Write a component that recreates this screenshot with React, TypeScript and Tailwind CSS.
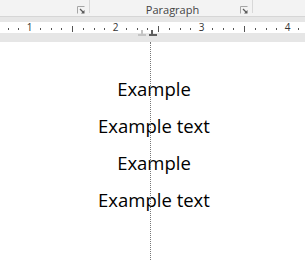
import React from "react";

const UNIT = 10.75;

function Launcher() {
  return (
    <svg width="8" height="8" viewBox="0 0 8 8" className="block">
      <path d="M0.5 7.5 V0.5 H7.5" fill="none" stroke="#a6a6a6" strokeWidth="1" />
      <path d="M3 3 L6.5 6.5" stroke="#5a5a5a" strokeWidth="1.2" />
      <polygon points="7.5,4 7.5,7.5 4,7.5" fill="#5a5a5a" />
    </svg>
  );
}

function RulerTicks() {
  const items: React.ReactNode[] = [];
  for (let k = 0; k < 40; k++) {
    const x = Math.round(-57 + k * UNIT);
    if (x < 0 || x > 305) continue;
    if (k % 8 === 0) continue;
    if (k % 4 === 0) {
      items.push(<rect key={k} x={x} y={4} width={1} height={6} fill="#555" />);
    } else {
      items.push(<rect key={k} x={x} y={6} width={1} height={2} fill="#555" />);
    }
  }
  return (
    <svg width="305" height="11" className="absolute left-0 top-0">
      {items}
    </svg>
  );
}

export default function App() {
  const numbers = [
    { n: "1", x: 29 },
    { n: "2", x: 115 },
    { n: "3", x: 201 },
    { n: "4", x: 287 },
  ];
  return (
    <div
      className="relative w-[305px] h-[260px] overflow-hidden bg-white"
      style={{ fontFamily: '"Open Sans", "Noto Sans", sans-serif' }}
    >
      {/* ribbon */}
      <div className="flex h-[17px] bg-[#f3f3f3] border-b border-[#d6d6d6]">
        <div className="w-[89px] flex justify-end items-start pt-[6px] pr-[4px]">
          <Launcher />
        </div>
        <div className="w-px h-[13px] bg-[#d8d8d8]" />
        <div className="w-[162px] relative flex justify-center">
          <span className="text-[11px] leading-[19px] text-[#444] pl-[3px]">Paragraph</span>
          <div className="absolute right-[4px] top-[6px]">
            <Launcher />
          </div>
        </div>
        <div className="w-px h-[13px] bg-[#d8d8d8]" />
        <div className="flex-1" />
      </div>
      {/* band */}
      <div className="h-[5px] bg-[#e6e6e6]" />
      {/* ruler */}
      <div className="relative h-[11px] bg-white">
        <RulerTicks />
        {numbers.map((it) => (
          <span
            key={it.n}
            className="absolute top-0 w-[10px] -ml-[5px] text-center text-[10px] leading-[11px] text-[#333]"
            style={{ left: it.x + 0.5 }}
          >
            {it.n}
          </span>
        ))}
      </div>
      {/* lower band */}
      <div className="h-[9px] bg-[#e6e6e6]" />
      {/* page */}
      <div className="flex flex-col items-center pt-[28px] pl-[3px] text-[18.5px] leading-[37px] text-black">
        <div>Example</div>
        <div>Example text</div>
        <div>Example</div>
        <div>Example text</div>
      </div>
      {/* indent markers */}
      <svg width="24" height="8" className="absolute left-[137px] top-[29px]">
        <rect x="4" y="1" width="2" height="4" fill="#c4c4c4" />
        <rect x="1" y="5" width="8" height="2" fill="#c4c4c4" />
        <rect x="14" y="1" width="2" height="4" fill="#5e5e5e" />
        <rect x="12" y="5" width="8" height="2" fill="#5e5e5e" />
      </svg>
      {/* dotted guide line */}
      <div className="absolute left-[150px] top-[42px] bottom-0 border-l border-dotted border-[#777] pointer-events-none" />
    </div>
  );
}
